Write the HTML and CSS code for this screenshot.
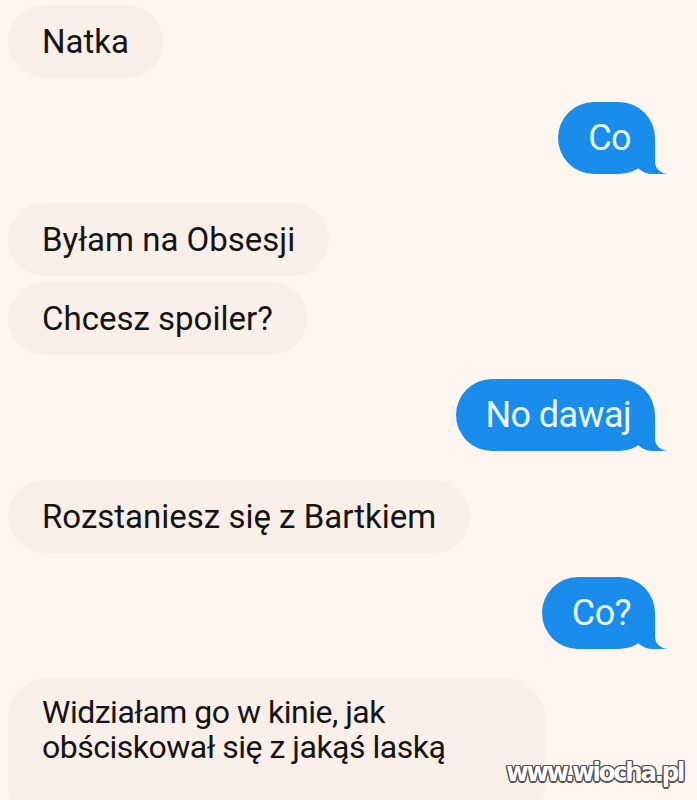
FILE: index.html
```html
<!DOCTYPE html>
<html lang="pl">
<head>
  <meta charset="UTF-8" />
  <meta name="viewport" content="width=device-width, initial-scale=1.0" />
  <title>Natka</title>
  <link rel="stylesheet" href="styles.css">
</head>
<body>

  <!-- Rozmowa -->
  <div class="chat">
    <div class="msg in">Natka</div>
    <div class="msg out">Co</div>
    <div class="msg in">Byłam na Obsesji</div>
    <div class="msg in">Chcesz spoiler?</div>
    <div class="msg out">No dawaj</div>
    <div class="msg in">Rozstaniesz się z Bartkiem</div>
    <div class="msg out">Co?</div>
    <div class="msg in multi">Widziałam go w kinie, jak<br>obściskował się z jakąś laską</div>
  </div>

  <div class="watermark">www.wiocha.pl</div>

</body>
</html>
```

FILE: styles.css
```css
body {
  margin: 0;
  background-color: #fdf5ee;
  font-family: Roboto, "Liberation Sans", sans-serif;
  height: 800px;
  overflow: hidden;
  position: relative;
}

.chat {
  display: flex;
  flex-direction: column;
  padding: 5px 42px 0 8px;
}

.msg {
  position: relative;
}

.in {
  align-self: flex-start;
  background-color: #f8efe8;
  color: #141414;
  font-size: 33px;
  line-height: 73px;
  height: 73px;
  padding: 0 34px;
  border-radius: 37px;
  white-space: nowrap;
}

.out {
  align-self: flex-end;
  background-color: #1a8cec;
  color: #e8f8ff;
  font-size: 36px;
  letter-spacing: -0.6px;
  line-height: 72px;
  height: 72px;
  padding: 0 24px 0 30px;
  border-radius: 36px;
}

.out::before {
  content: "";
  position: absolute;
  right: -12px;
  bottom: 0;
  width: 34px;
  height: 34px;
  background-color: #1a8cec;
  border-bottom-left-radius: 20px 18px;
  z-index: -1;
}

.out::after {
  content: "";
  position: absolute;
  right: -24px;
  bottom: 0;
  width: 24px;
  height: 36px;
  background-color: #fdf5ee;
  border-bottom-left-radius: 14px 12px;
}

.in + .out {
  margin-top: 24px;
}

.out + .in {
  margin-top: 29px;
}

.in + .in {
  margin-top: 6px;
}

.multi {
  width: 469px;
  height: auto;
  font-size: 32px;
  letter-spacing: -0.5px;
  line-height: 35px;
  padding: 17px 34px 60px;
  border-radius: 40px;
}

.watermark {
  position: absolute;
  right: 14px;
  bottom: 13px;
  font-family: "DejaVu Sans Condensed", "DejaVu Sans", sans-serif;
  font-weight: bold;
  font-size: 27px;
  letter-spacing: -2.2px;
  color: #fff;
  text-shadow: 1.5px 0 #555, -1.5px 0 #555, 0 1.5px #555, 0 -1.5px #555,
    1px 1px #555, -1px -1px #555, 1px -1px #555, -1px 1px #555;
}
```
